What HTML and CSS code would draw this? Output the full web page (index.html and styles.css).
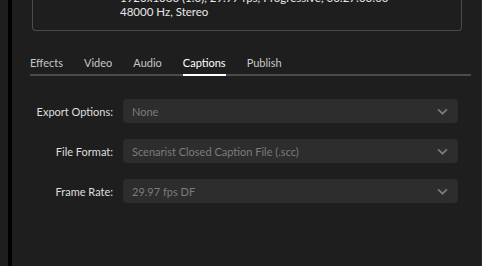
FILE: index.html
```html
<!DOCTYPE html>
<html lang="en">
<head>
    <meta charset="UTF-8">
    <title>Export Settings</title>
    <link rel="stylesheet" href="styles.css">
</head>
<body>
    <div class="edge"></div>
    <div class="panel">
        <div class="summary">
            <p>1920x1080 (1.0), 29.97 fps, Progressive, 00:27:00:00</p>
            <p>48000 Hz, Stereo</p>
        </div>

        <div class="tabs">
            <span class="tab">Effects</span>
            <span class="tab">Video</span>
            <span class="tab">Audio</span>
            <span class="tab active">Captions</span>
            <span class="tab">Publish</span>
        </div>

        <div class="form">
            <div class="row">
                <label>Export Options:</label>
                <div class="select">None <svg viewBox="0 0 10 6"><path d="M1 1l4 4 4-4"/></svg></div>
            </div>
            <div class="row">
                <label>File Format:</label>
                <div class="select">Scenarist Closed Caption File (.scc) <svg viewBox="0 0 10 6"><path d="M1 1l4 4 4-4"/></svg></div>
            </div>
            <div class="row">
                <label>Frame Rate:</label>
                <div class="select">29.97 fps DF <svg viewBox="0 0 10 6"><path d="M1 1l4 4 4-4"/></svg></div>
            </div>
        </div>
    </div>
</body>
</html>
```

FILE: styles.css
```css
* { margin: 0; padding: 0; box-sizing: border-box; }
html, body { height: 100%; }
body {
    background: #1e1e1e;
    font-family: 'Lato', sans-serif;
    font-size: 11px;
    color: #dedede;
    display: flex;
    overflow: hidden;
}
.edge { width: 4px; margin-left: 8px; background: #000; }
.panel {
    flex: 1;
    padding: 0 10px 0 20px;
    border-right: 1px solid #2a2a2a;
}
.summary {
    margin-top: -9px;
    margin-right: 9px;
    height: 40px;
    border: 1px solid #4a4a4a;
    border-top: none;
    border-radius: 0 0 4px 4px;
    padding: 0 0 0 87px;
    font-size: 11.5px;
    line-height: 14px;
    color: #e8e8e8;
}
.tabs {
    display: flex;
    gap: 21px;
    margin: 24px 0 0 -2px;
    padding-bottom: 3px;
    border-bottom: 2px solid #4b4b4b;
    color: #c8c8c8;
    font-size: 11px;
}
.tab { position: relative; line-height: 16px; }
.tab.active { color: #fff; }
.tab.active::after {
    content: "";
    position: absolute;
    left: 0;
    right: 0;
    bottom: -5px;
    height: 2px;
    background: #fff;
}
.form { margin-top: 23px; display: flex; flex-direction: column; gap: 16px; }
.row { display: flex; align-items: center; }
.row label { width: 81px; text-align: right; margin-right: 10px; white-space: nowrap; }
.select {
    width: 335px;
    height: 24px;
    background: #2d2d2d;
    border-radius: 4px;
    color: #7c7c7c;
    padding: 0 10px 0 9px;
    display: flex;
    align-items: center;
    justify-content: space-between;
}
.select svg {
    width: 11px;
    height: 7px;
    fill: none;
    stroke: #7a7a7a;
    stroke-width: 1.6;
}
```
